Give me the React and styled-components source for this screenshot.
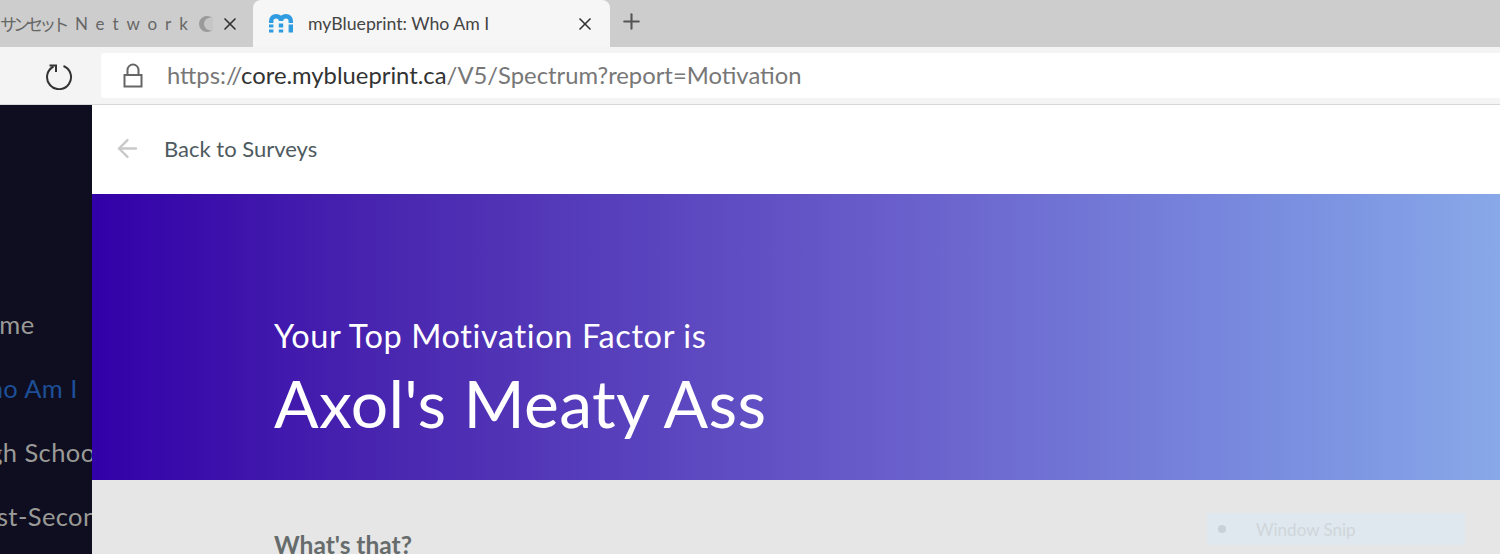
import React from "react";
import styled, { createGlobalStyle } from "styled-components";
import { FiArrowLeft, FiPlus, FiX } from "react-icons/fi";

const GlobalStyle = createGlobalStyle`
  html, body {
    margin: 0;
    padding: 0;
    height: 554px;
    overflow: hidden;
    background: #e6e6e6;
  }
`;

const Page = styled.div`
  width: 1500px;
  height: 554px;
  display: flex;
  flex-direction: column;
  overflow: hidden;
  font-family: "Lato", "Liberation Sans", "Noto Sans CJK JP", sans-serif;
`;

const TabStrip = styled.div`
  height: 47px;
  flex: none;
  display: flex;
  align-items: flex-end;
  background: #cdcdcd;
`;

const InactiveTab = styled.div`
  width: 250px;
  height: 47px;
  flex: none;
  display: flex;
  align-items: center;
  color: #666;
  font-size: 17px;
  white-space: nowrap;
  overflow: hidden;
`;

const Kana = styled.span`
  width: 75px;
  flex: none;
  letter-spacing: -3.9px;
`;

const SpacedTitle = styled.span`
  width: 123px;
  flex: none;
  overflow: hidden;
  letter-spacing: 7.9px;
`;

const Moon = styled.svg`
  width: 15px;
  height: 20px;
  flex: none;
`;

const TabClose = styled.span`
  display: flex;
  margin-left: 7px;
  color: #333;
  font-size: 20px;
`;

const ActiveTab = styled.div`
  width: 357px;
  height: 47px;
  margin-left: 3px;
  flex: none;
  display: flex;
  align-items: center;
  padding: 0 15px 0 15px;
  box-sizing: border-box;
  background: #f6f6f6;
  border-radius: 8px 8px 0 0;
  color: #444;
  font-size: 17.7px;
`;

const TabTitle = styled.span`
  flex: 1;
  margin-left: 14px;
`;

const NewTab = styled.div`
  display: flex;
  align-self: center;
  margin-left: 9px;
  margin-top: -4px;
  color: #555;
  font-size: 25px;
`;

const AddressRow = styled.div`
  height: 58px;
  flex: none;
  display: flex;
  align-items: center;
  background: #f4f4f4;
  border-bottom: 1px solid #d8d8d8;
  box-sizing: border-box;
`;

const ReloadButton = styled.div`
  width: 101px;
  flex: none;
  display: flex;
  justify-content: flex-end;
  padding-right: 28px;
  box-sizing: border-box;
`;

const AddressField = styled.div`
  flex: 1;
  height: 45px;
  display: flex;
  align-items: center;
  gap: 24px;
  padding-left: 22px;
  margin-top: -1px;
  background: #fff;
  border-radius: 4px 0 0 4px;
  color: #777;
  font-size: 23.8px;
`;

const Host = styled.span`
  color: #333;
`;

const Body = styled.div`
  flex: 1;
  display: flex;
  min-height: 0;
`;

const Sidebar = styled.nav`
  width: 92px;
  flex: none;
  display: flex;
  flex-direction: column;
  gap: 36px;
  padding-top: 205px;
  box-sizing: border-box;
  overflow: hidden;
  background: #0e0e20;
`;

const NavItem = styled.div`
  margin-left: ${(p) => p.$shift}px;
  height: 28px;
  line-height: 28px;
  white-space: nowrap;
  font-size: 25.5px;
  letter-spacing: 0.4px;
  color: ${(p) => (p.$active ? "#1d4f97" : "#9a9a96")};
`;

const Main = styled.main`
  flex: 1;
  display: flex;
  flex-direction: column;
  min-width: 0;
`;

const BackBar = styled.div`
  height: 89px;
  flex: none;
  display: flex;
  align-items: center;
  gap: 22px;
  padding: 0 0 2px 21px;
  box-sizing: border-box;
  background: #fff;
  color: #4e5a60;
  font-size: 22px;
`;

const BackArrow = styled.span`
  display: flex;
  color: #c9c9c9;
  font-size: 29px;
`;

const Hero = styled.section`
  height: 286px;
  flex: none;
  display: flex;
  flex-direction: column;
  padding: 122px 0 0 182px;
  box-sizing: border-box;
  background: linear-gradient(90deg, #3200a8 0%, #4a28b0 22%, #6a60cc 58%, #7a8fe0 85%, #88a8e8 100%);
  color: #fff;
`;

const HeroLead = styled.div`
  font-size: 32.5px;
  line-height: 40px;
  letter-spacing: 0.6px;
`;

const HeroTitle = styled.h1`
  margin: 7px 0 0;
  font-size: 66px;
  line-height: 80px;
  font-weight: 400;
  letter-spacing: 0.3px;
`;

const Details = styled.section`
  position: relative;
  flex: 1;
  padding: 51px 0 0 182px;
  background: #e6e6e6;
`;

const Question = styled.div`
  color: #666c6c;
  font-size: 24.5px;
  font-weight: 700;
  line-height: 28px;
`;

/* faded snipping tool tooltip floating over the page */
const SnipBadge = styled.div`
  position: absolute;
  left: 1115px;
  top: 33px;
  width: 258px;
  height: 32px;
  display: flex;
  align-items: center;
  background: #dfe8ee;
  color: #cfd6da;
  font-size: 17px;
`;

const SnipDot = styled.span`
  width: 8px;
  height: 8px;
  margin: 0 30px 0 11px;
  border-radius: 50%;
  background: #c6d2d8;
`;

function BlueprintLogo() {
  return (
    <svg width="26" height="20" viewBox="0 0 26 20" fill="none">
      <path d="M3.2 9 V7 C3.2 3.6 5.5 2.2 8 2.2 C11 2.2 13 4 13 7 C13 4 15 2.2 18 2.2 C20.5 2.2 22.8 3.6 22.8 7 V9" stroke="#2f9be0" strokeWidth="4.4" />
      <rect x="1" y="10.5" width="4.4" height="3" fill="#2f9be0" />
      <rect x="1" y="15.5" width="4.4" height="3" fill="#2f9be0" />
      <rect x="10.8" y="9.5" width="4.4" height="4" fill="#2f9be0" />
      <rect x="10.8" y="15.5" width="4.4" height="3" fill="#2f9be0" />
      <rect x="20.6" y="10.5" width="4.4" height="8" fill="#2f9be0" />
    </svg>
  );
}

function ReloadIcon() {
  return (
    <svg width="28" height="28" viewBox="0 0 28 28" fill="none" stroke="#333" strokeWidth="2">
      <path d="M18.5 4 A12 12 0 1 1 8.5 4.5" />
      <path d="M4.5 3.5 H11 V10" />
    </svg>
  );
}

function PadlockIcon() {
  return (
    <svg width="20" height="25" viewBox="0 0 20 25" fill="none" stroke="#666" strokeWidth="2">
      <rect x="1.5" y="12" width="17" height="11.5" />
      <path d="M4.5 12 V7 A5.5 5.5 0 0 1 15.5 7 V12" />
    </svg>
  );
}

const navItems = [
  { label: "Home", shift: -35 },
  { label: "Who Am I", shift: -38, active: true },
  { label: "High School", shift: -37 },
  { label: "Post-Secondary", shift: -33 },
];

export default function App() {
  return (
    <Page>
      <GlobalStyle />
      <TabStrip>
        <InactiveTab>
          <Kana>サンセット</Kana>
          <SpacedTitle>Network</SpacedTitle>
          <Moon viewBox="0 0 15 20">
            <circle cx="9" cy="10" r="8" fill="#9a9a9a" />
            <circle cx="12.5" cy="10" r="6.5" fill="#c6c6c6" />
          </Moon>
          <TabClose>
            <FiX />
          </TabClose>
        </InactiveTab>
        <ActiveTab>
          <BlueprintLogo />
          <TabTitle>myBlueprint: Who Am I</TabTitle>
          <TabClose>
            <FiX />
          </TabClose>
        </ActiveTab>
        <NewTab>
          <FiPlus />
        </NewTab>
      </TabStrip>
      <AddressRow>
        <ReloadButton>
          <ReloadIcon />
        </ReloadButton>
        <AddressField>
          <PadlockIcon />
          <span>
            https://<Host>core.myblueprint.ca</Host>/V5/Spectrum?report=Motivation
          </span>
        </AddressField>
      </AddressRow>
      <Body>
        <Sidebar>
          {navItems.map((item) => (
            <NavItem key={item.label} $shift={item.shift} $active={item.active}>
              {item.label}
            </NavItem>
          ))}
        </Sidebar>
        <Main>
          <BackBar>
            <BackArrow>
              <FiArrowLeft />
            </BackArrow>
            Back to Surveys
          </BackBar>
          <Hero>
            <HeroLead>Your Top Motivation Factor is</HeroLead>
            <HeroTitle>Axol's Meaty Ass</HeroTitle>
          </Hero>
          <Details>
            <Question>What's that?</Question>
            <SnipBadge>
              <SnipDot />
              Window Snip
            </SnipBadge>
          </Details>
        </Main>
      </Body>
    </Page>
  );
}
